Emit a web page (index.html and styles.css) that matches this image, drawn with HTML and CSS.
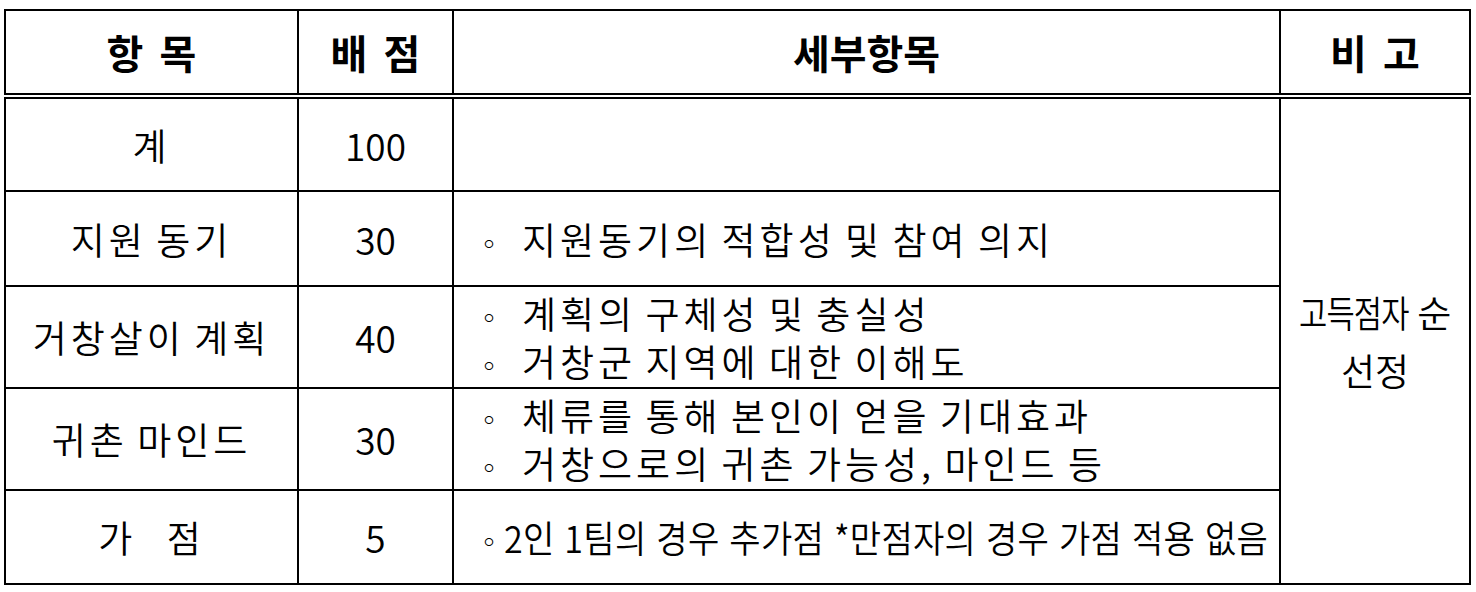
FILE: index.html
```html
<!DOCTYPE html>
<html lang="ko">
<head>
<meta charset="utf-8">
<title>평가 기준</title>
<link rel="stylesheet" href="styles.css">
</head>
<body>
<table class="score">
  <colgroup>
    <col class="c-item">
    <col class="c-point">
    <col class="c-detail">
    <col class="c-note">
  </colgroup>
  <thead>
    <tr class="head">
      <th>항 목</th>
      <th>배 점</th>
      <th>세부항목</th>
      <th>비 고</th>
    </tr>
  </thead>
  <tbody>
    <tr class="row r1">
      <td>계</td>
      <td class="num">100</td>
      <td class="detail"></td>
      <td class="note" rowspan="5"><span class="cond">고득점자</span> 순<br>선정</td>
    </tr>
    <tr class="row r2">
      <td>지원 동기</td>
      <td class="num">30</td>
      <td class="detail"><div class="line"><span class="dot">◦</span>지원동기의 적합성 및 참여 의지</div></td>
    </tr>
    <tr class="row r3">
      <td>거창살이 계획</td>
      <td class="num">40</td>
      <td class="detail">
        <div class="line"><span class="dot">◦</span>계획의 구체성 및 충실성</div>
        <div class="line"><span class="dot">◦</span>거창군 지역에 대한 이해도</div>
      </td>
    </tr>
    <tr class="row r4">
      <td>귀촌 마인드</td>
      <td class="num">30</td>
      <td class="detail">
        <div class="line"><span class="dot">◦</span>체류를 통해 본인이 얻을 기대효과</div>
        <div class="line"><span class="dot">◦</span>거창으로의 귀촌 가능성, 마인드 등</div>
      </td>
    </tr>
    <tr class="row r5">
      <td class="gap">가 점</td>
      <td class="num">5</td>
      <td class="detail"><div class="line"><span class="dot small">◦</span><span class="squeeze">2인 1팀의 경우 추가점 *만점자의 경우 가점 적용 없음</span></div></td>
    </tr>
  </tbody>
</table>
</body>
</html>
```

FILE: styles.css
```css
html, body {
  margin: 0;
  padding: 0;
  background: #fff;
}

body {
  padding: 9px 0 0 4px;
  font-family: "Noto Sans CJK KR", "Noto Sans", sans-serif;
  color: #000;
}

.score {
  border-collapse: collapse;
  table-layout: fixed;
  width: 1465px;
}

.c-item { width: 293px; }
.c-point { width: 155px; }
.c-detail { width: 827px; }
.c-note { width: 190px; }

.score th,
.score td {
  border: 2px solid #000;
  padding: 0;
  text-align: center;
  vertical-align: middle;
}

.head th {
  height: 82px;
  font-size: 40px;
  font-weight: 700;
  word-spacing: 5px;
  border-bottom: 6px double #000;
  line-height: 1;
}

.row td {
  font-size: 37px;
  font-weight: 350;
  line-height: 48px;
  letter-spacing: 4px;
  word-spacing: -5px;
}

.r1 { height: 95px; }
.r2 { height: 95px; }
.r3 { height: 102px; }
.r4 { height: 102px; }
.r5 { height: 94px; }

.score td.num {
  letter-spacing: 0;
  word-spacing: 0;
}

.score td.gap {
  word-spacing: 16px;
}

.score td.detail {
  text-align: left;
  padding-left: 21px;
}

.line {
  white-space: nowrap;
}

.dot {
  display: inline-block;
  width: 47px;
  font-size: 28px;
  line-height: 1;
  letter-spacing: 0;
}

.dot.small {
  width: 29px;
}

.squeeze {
  display: inline-block;
  letter-spacing: 0.3px;
  word-spacing: 0;
  transform: scaleX(0.92);
  transform-origin: left center;
}

.score td.note {
  line-height: 58px;
  letter-spacing: 0;
  word-spacing: 0;
}

.cond {
  display: inline-block;
  letter-spacing: -1px;
  transform: scaleX(0.83);
  transform-origin: left center;
  margin-right: -24px;
}
```
